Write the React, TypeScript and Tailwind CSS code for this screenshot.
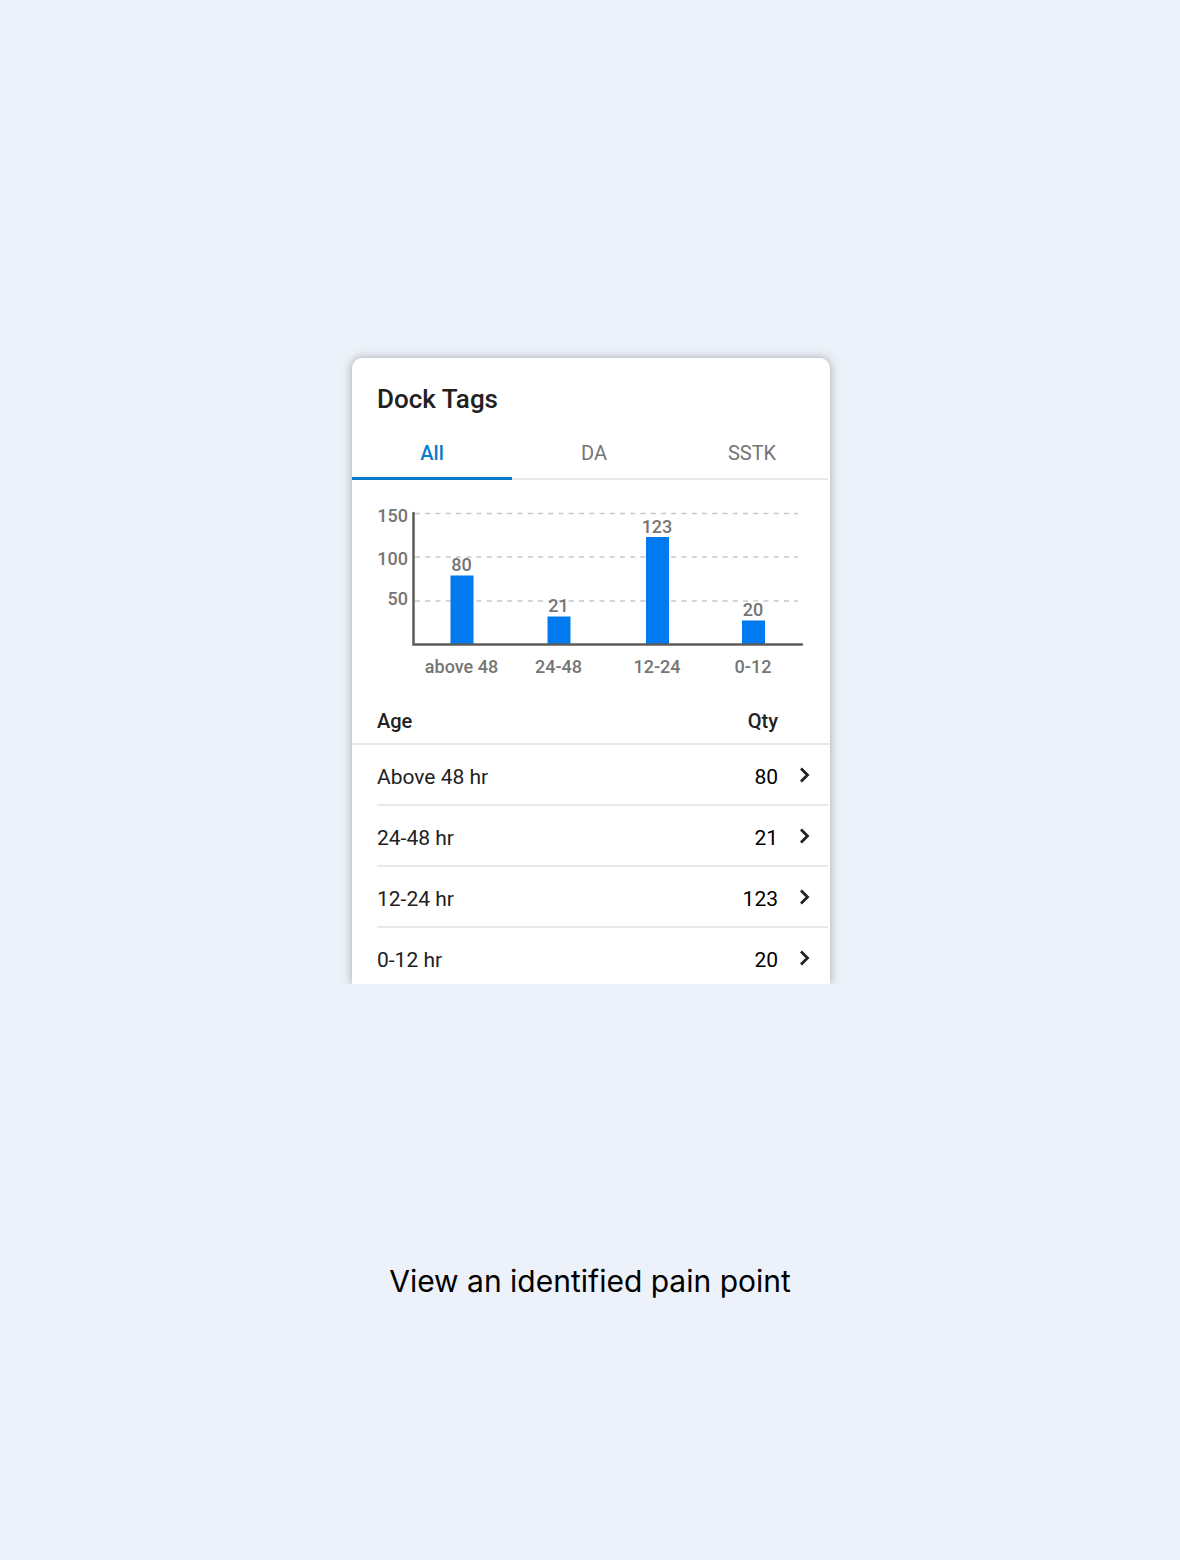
import { useState } from "react";

const tabs = ["All", "DA", "SSTK"];

const gridLines = [
  { label: "150", y: 33, textY: 42 },
  { label: "100", y: 76.5, textY: 85 },
  { label: "50", y: 120.5, textY: 125 },
];

const bars = [
  { label: "above 48", value: 80, x: 98.5, top: 95.5 },
  { label: "24-48", value: 21, x: 195.5, top: 136.5 },
  { label: "12-24", value: 123, x: 294, top: 57 },
  { label: "0-12", value: 20, x: 390, top: 140.5 },
];

const rows = [
  { age: "Above 48 hr", qty: 80 },
  { age: "24-48 hr", qty: 21 },
  { age: "12-24 hr", qty: 123 },
  { age: "0-12 hr", qty: 20 },
];

function AgeChart() {
  return (
    <svg
      viewBox="0 0 478 212"
      className="block w-full text-[18px] font-medium"
      role="img"
      aria-label="Dock tags by age"
    >
      {gridLines.map((line) => (
        <g key={line.label}>
          <line
            x1="63"
            x2="446"
            y1={line.y + 0.5}
            y2={line.y + 0.5}
            stroke="#c8c8c8"
            strokeWidth="1.3"
            strokeDasharray="5 5.25"
          />
          <text x="56" y={line.textY} textAnchor="end" fill="#757575">
            {line.label}
          </text>
        </g>
      ))}
      {bars.map((bar) => (
        <g key={bar.label}>
          <rect x={bar.x} y={bar.top} width="23" height={164 - bar.top} fill="#007aee" />
          <text x={bar.x + 11} y={Math.floor(bar.top) - 4} textAnchor="middle" fill="#757575">
            {bar.value}
          </text>
          <text x={bar.x + 11} y="193" textAnchor="middle" fill="#757575">
            {bar.label}
          </text>
        </g>
      ))}
      <path
        d="M61.5 33V164.5H450"
        fill="none"
        stroke="#5c5c5c"
        strokeWidth="2.5"
        strokeLinecap="round"
      />
    </svg>
  );
}

function Chevron() {
  return (
    <svg viewBox="0 0 12 16" className="h-4 w-3" fill="none" aria-hidden="true">
      <path d="M2 1.5L8.5 8L2 14.5" stroke="#212121" strokeWidth="2.8" />
    </svg>
  );
}

function DockTagsCard() {
  const [active, setActive] = useState("All");
  return (
    <section className="rounded-t-[10px] bg-white font-[Roboto,sans-serif] text-[#212121] shadow-[0_0_10px_rgba(80,95,90,0.5)]">
      <h1 className="px-[25px] pt-6 text-[26px] leading-[34px] font-medium">Dock Tags</h1>
      <div
        role="tablist"
        className="mr-0.5 grid grid-cols-[160fr_164fr_152fr] pt-2.5"
      >
        {tabs.map((tab) => (
          <button
            key={tab}
            role="tab"
            aria-selected={active === tab}
            onClick={() => setActive(tab)}
            className={
              active === tab
                ? "h-[54px] cursor-pointer border-b-[3px] border-[#0a7acb] pt-0.5 text-xl font-medium text-[#0a7acb]"
                : "h-[54px] cursor-pointer border-b-2 border-[#e9e9e9] pt-0.5 text-xl text-[#757575]"
            }
          >
            {tab}
          </button>
        ))}
      </div>
      <AgeChart />
      <table className="w-full border-collapse text-[21px]">
        <thead>
          <tr className="h-[52px] border-b-2 border-[#e9e9e9] text-left text-xl">
            <th scope="col" className="pt-1.5 pl-[25px] font-medium">
              Age
            </th>
            <th scope="col" className="pt-1.5 pr-[52px] text-right font-medium">
              Qty
            </th>
          </tr>
        </thead>
        <tbody>
          {rows.map((row) => (
            <tr key={row.age} className="group">
              <td className="p-0">
                <div className="ml-[25px] flex h-[61px] items-center border-b-2 border-[#e9e9e9] pt-1.5 group-last:h-14 group-last:border-b-0 group-last:pt-2.5">
                  {row.age}
                </div>
              </td>
              <td className="p-0">
                <div className="mr-0.5 flex h-[61px] items-center justify-end gap-[21px] border-b-2 border-[#e9e9e9] pt-1.5 pr-[17px] text-black group-last:h-14 group-last:border-b-0 group-last:pt-2.5">
                  {row.qty}
                  <button
                    aria-label={`View ${row.age}`}
                    className="cursor-pointer pb-1.5"
                  >
                    <Chevron />
                  </button>
                </div>
              </td>
            </tr>
          ))}
        </tbody>
      </table>
    </section>
  );
}

export default function App() {
  return (
    <main className="flex min-h-screen flex-col items-center bg-[#edf1f9] pt-[346px]">
      <div className="w-full max-w-[500px] overflow-hidden pt-3 pr-2.5 pl-3">
        <DockTagsCard />
      </div>
      <p className="mt-[273px] px-4 pb-10 text-center font-[Inter,sans-serif] text-[30px] leading-[48px] text-black">
        View an identified pain point
      </p>
    </main>
  );
}
